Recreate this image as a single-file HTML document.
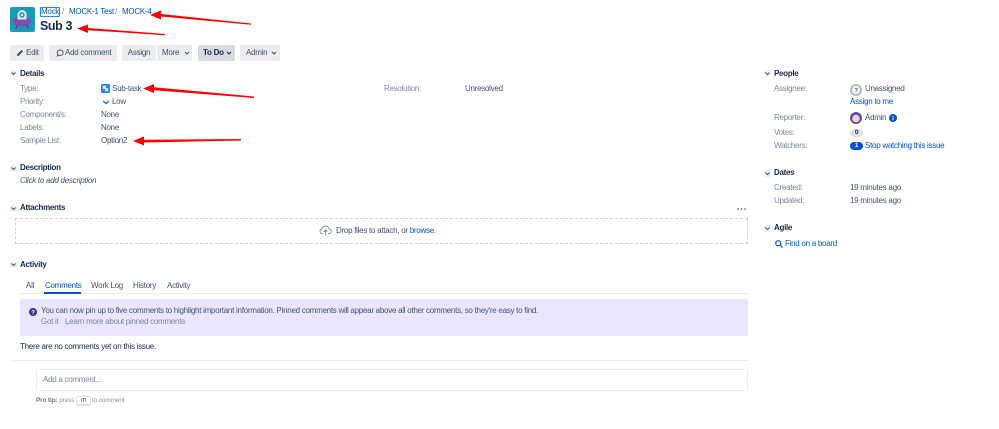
<!DOCTYPE html>
<html><head><meta charset="utf-8"><style>
html,body{margin:0;padding:0;background:#fff}
body{width:999px;height:429px;position:relative;overflow:hidden;font-family:"Liberation Sans",sans-serif;font-size:8px;letter-spacing:-.27px;color:#42526e}
.t{position:absolute;white-space:nowrap;line-height:12px}
.l{color:#0052cc}
.g{color:#7a869a}
.d{color:#172b4d}
.h{font-weight:bold;color:#172b4d;font-size:8px;letter-spacing:-.3px}
.b{position:absolute;background:#ebecf0;border-radius:2px;height:16px;top:45px;line-height:16px;color:#42526e;font-size:8px;text-align:left;white-space:nowrap}
.c{position:absolute;width:7px;height:7px;background:#f0f1f4;border-radius:1px}
svg{position:absolute;overflow:visible}
</style></head><body>

<!-- project avatar -->
<svg style="left:10px;top:7px" width="25" height="25" viewBox="0 0 25 25">
<rect width="25" height="25" rx="2" fill="#1a9bb5"/>
<path d="M7 18l-1 3.500M17 18l1 3.500" stroke="#5e3a90" stroke-width="1.500"/>
<ellipse cx="12" cy="14.500" rx="9.500" ry="4.800" fill="#7e4fb0"/>
<path d="M7.500 12.500V7.500a4.500 4.500 0 0 1 9 0v5z" fill="#dfeef5"/>
<circle cx="12" cy="8" r="2.700" fill="#2f8fc4"/><circle cx="12" cy="8" r="1.100" fill="#fff"/>
</svg>

<div class="t l" style="left:40px;top:7px;border:1px solid #2684ff;line-height:8px;height:8px;width:18px;text-align:center;border-radius:1px">Mock</div>
<div class="t g" style="left:62px;top:6px">/</div>
<div class="t l" style="left:69px;top:6px">MOCK-1 Test</div>
<div class="t g" style="left:115px;top:6px">/</div>
<div class="t l" style="left:122px;top:6px">MOCK-4</div>
<div class="t d" style="left:40px;top:18px;font-size:12.500px;letter-spacing:-.4px;line-height:17px;font-weight:bold">Sub 3</div>

<!-- toolbar -->
<div class="b" style="left:10px;width:34px;padding-left:0"><span style="padding-left:16px">Edit</span></div>
<svg style="left:16px;top:49px" width="8" height="8" viewBox="0 0 8 8"><path d="M1 7l.4-2L5.600 1 7 2.400 3 6.600z" fill="#42526e"/></svg>
<div class="b" style="left:49px;width:68px"><span style="padding-left:16px">Add comment</span></div>
<svg style="left:56px;top:49px" width="8" height="8" viewBox="0 0 8 8"><path d="M4 1a3 2.700 0 1 1-1.400 5L1.400 7l.3-1.800A3 2.700 0 0 1 4 1z" fill="none" stroke="#42526e" stroke-width=".9"/></svg>
<div class="b" style="left:122px;width:34px;text-align:center">Assign</div>
<div class="b" style="left:157px;width:35px"><span style="padding-left:5px">More</span></div>
<div class="b" style="left:198px;width:37px;background:#d8dae0;color:#172b4d;font-weight:bold"><span style="padding-left:5px">To Do</span></div>
<div class="b" style="left:240px;width:40px"><span style="padding-left:6px">Admin</span></div>
<svg style="left:184px;top:51px" width="6" height="4"><path d="M1 1l2 2 2-2" fill="none" stroke="#42526e" stroke-width="1.100"/></svg>
<svg style="left:226px;top:51px" width="6" height="4"><path d="M1 1l2 2 2-2" fill="none" stroke="#172b4d" stroke-width="1.100"/></svg>
<svg style="left:271px;top:51px" width="6" height="4"><path d="M1 1l2 2 2-2" fill="none" stroke="#42526e" stroke-width="1.100"/></svg>

<!-- section chevrons -->
<div class="c" style="left:10px;top:70px"></div>
<div class="c" style="left:10px;top:165px"></div>
<div class="c" style="left:10px;top:205px"></div>
<div class="c" style="left:10px;top:261px"></div>
<div class="c" style="left:764px;top:70px"></div>
<div class="c" style="left:764px;top:170px"></div>
<div class="c" style="left:764px;top:225px"></div>
<svg style="left:10px;top:0" width="7" height="280" fill="none" stroke="#42526e" stroke-width="1"><path d="M1.500 72.500l2 2 2-2M1.500 167.500l2 2 2-2M1.500 207.500l2 2 2-2M1.500 263.500l2 2 2-2"/></svg>
<svg style="left:764px;top:0" width="7" height="240" fill="none" stroke="#42526e" stroke-width="1"><path d="M1.500 72.500l2 2 2-2M1.500 172.500l2 2 2-2M1.500 227.500l2 2 2-2"/></svg>

<!-- details -->
<div class="t h" style="left:20px;top:67.500px">Details</div>
<div class="t g" style="left:20px;top:82.500px">Type:</div>
<svg style="left:101px;top:84px" width="9" height="9" viewBox="0 0 9 9"><rect width="9" height="9" rx="1" fill="#2684ff"/><rect x="1.800" y="1.800" width="3" height="3" fill="#fff"/><rect x="4.200" y="4.200" width="3" height="3" fill="#fff" opacity=".85"/></svg>
<div class="t" style="left:112px;top:82.500px">Sub-task</div>
<div class="t g" style="left:20px;top:95.500px">Priority:</div>
<svg style="left:102px;top:100px" width="8" height="5"><path d="M1 1l3 2.500L7 1" fill="none" stroke="#0065ff" stroke-width="1.200"/></svg>
<div class="t" style="left:112px;top:95.500px">Low</div>
<div class="t g" style="left:20px;top:108.500px">Component/s:</div>
<div class="t" style="left:101px;top:108.500px">None</div>
<div class="t g" style="left:20px;top:121.500px">Labels:</div>
<div class="t" style="left:101px;top:121.500px">None</div>
<div class="t g" style="left:20px;top:134.500px">Sample List:</div>
<div class="t" style="left:101px;top:134.500px">Option2</div>
<div class="t g" style="left:384px;top:82.500px">Resolution:</div>
<div class="t" style="left:465px;top:82.500px">Unresolved</div>

<div class="t h" style="left:20px;top:162px">Description</div>
<div class="t" style="left:20px;top:175px;font-style:italic">Click to add description</div>

<div class="t h" style="left:20px;top:202px">Attachments</div>
<svg style="left:737px;top:208px" width="9" height="3" fill="#42526e"><circle cx="1" cy="1" r=".8"/><circle cx="4.500" cy="1" r=".8"/><circle cx="8" cy="1" r=".8"/></svg>
<div style="position:absolute;left:15px;top:218px;width:731px;height:24px;border:1px dashed #d0d3d9"></div>
<svg style="left:319px;top:225px" width="13" height="11" viewBox="0 0 13 11" fill="none" stroke="#6b778c" stroke-width=".8"><path d="M4 8.500H3a2.300 2.300 0 0 1-.3-4.500A3.800 3.800 0 0 1 10 3.600a2.500 2.500 0 0 1 .2 4.900H9"/><path d="M6.500 10.500V5M4.800 6.800l1.700-1.800 1.700 1.800"/></svg>
<div class="t" style="left:336px;top:224.500px">Drop files to attach, or <span class="l">browse.</span></div>

<div class="t h" style="left:20px;top:259px">Activity</div>
<div class="t" style="left:26px;top:279.500px">All</div>
<div class="t l" style="left:45px;top:279.500px">Comments</div>
<div class="t" style="left:91px;top:279.500px">Work Log</div>
<div class="t" style="left:133px;top:279.500px">History</div>
<div class="t" style="left:167px;top:279.500px">Activity</div>
<div style="position:absolute;left:20px;top:293px;width:728px;height:1px;background:#ebecf0"></div>
<div style="position:absolute;left:44px;top:292px;width:37px;height:2px;background:#0052cc"></div>

<div style="position:absolute;left:20px;top:299px;width:728px;height:37px;background:#eae6ff;border-radius:2px"></div>
<svg style="left:29px;top:308px" width="8" height="8" viewBox="0 0 8 8"><circle cx="4" cy="4" r="4" fill="#403294"/><text x="4" y="6.300" font-size="6" font-weight="bold" text-anchor="middle" fill="#fff" font-family="Liberation Sans">?</text></svg>
<div class="t" style="left:41px;top:305px">You can now pin up to five comments to highlight important information. Pinned comments will appear above all other comments, so they're easy to find.</div>
<div class="t g" style="left:41px;top:316px">Got it</div>
<div class="t g" style="left:65px;top:316px">Learn more about pinned comments</div>

<div class="t d" style="left:20px;top:340.500px">There are no comments yet on this issue.</div>
<div style="position:absolute;left:10px;top:360px;width:738px;height:1px;background:#ebecf0"></div>
<div style="position:absolute;left:36px;top:369px;width:710px;height:20px;border:1px solid #ebecf0;border-radius:2px"></div>
<div class="t g" style="left:43px;top:374px">Add a comment...</div>
<div class="t" style="left:36px;top:394.500px;font-size:6.500px;letter-spacing:-.15px;color:#8993a4"><b style="color:#6b778c">Pro tip:</b> press</div>
<div style="position:absolute;left:76px;top:395.500px;width:13px;height:7px;border:1px solid #dfe1e6;border-bottom-width:2px;border-radius:2px;font-size:7px;line-height:7px;text-align:center;color:#42526e">m</div>
<div class="t" style="left:92px;top:394.500px;font-size:6.500px;letter-spacing:-.15px;color:#8993a4">to comment</div>

<!-- right column -->
<div class="t h" style="left:774px;top:67.500px">People</div>
<div class="t g" style="left:774px;top:83px">Assignee:</div>
<svg style="left:850px;top:84px" width="12" height="12" viewBox="0 0 12 12"><circle cx="6" cy="6" r="6" fill="#b3bac5"/><circle cx="6" cy="6" r="4" fill="#f4f5f7"/><text x="6" y="8" font-size="5.500" font-weight="bold" text-anchor="middle" fill="#42526e" font-family="Liberation Sans">?</text></svg>
<div class="t" style="left:865px;top:83px">Unassigned</div>
<div class="t l" style="left:850px;top:96px">Assign to me</div>
<div class="t g" style="left:774px;top:112px">Reporter:</div>
<svg style="left:850px;top:112px" width="12" height="12" viewBox="0 0 12 12"><circle cx="6" cy="6" r="6" fill="#5e4db2"/><circle cx="6" cy="6.500" r="3.800" fill="#f3d6c8"/></svg>
<div class="t" style="left:865px;top:111.500px">Admin</div>
<svg style="left:889px;top:114px" width="8" height="8" viewBox="0 0 8 8"><circle cx="4" cy="4" r="4" fill="#0052cc"/><rect x="3.500" y="3.400" width="1" height="2.800" fill="#fff"/><rect x="3.500" y="1.800" width="1" height="1" fill="#fff"/></svg>
<div class="t g" style="left:774px;top:127px">Votes:</div>
<div style="position:absolute;left:850px;top:129px;width:13px;height:8px;border-radius:4px;background:#dfe1e6;font-size:6.500px;line-height:8px;text-align:center;font-weight:bold;color:#172b4d">0</div>
<div class="t g" style="left:774px;top:140px">Watchers:</div>
<div style="position:absolute;left:850px;top:142px;width:13px;height:8px;border-radius:4px;background:#0052cc;font-size:6.500px;line-height:8px;text-align:center;font-weight:bold;color:#fff">1</div>
<div class="t l" style="left:865px;top:140px">Stop watching this issue</div>

<div class="t h" style="left:774px;top:167px">Dates</div>
<div class="t g" style="left:774px;top:182px">Created:</div>
<div class="t" style="left:850px;top:182px">19 minutes ago</div>
<div class="t g" style="left:774px;top:195px">Updated:</div>
<div class="t" style="left:850px;top:195px">19 minutes ago</div>

<div class="t h" style="left:774px;top:222px">Agile</div>
<svg style="left:775px;top:240px" width="8" height="8" viewBox="0 0 8 8" fill="none" stroke="#0052cc" stroke-width="1.200"><circle cx="3.200" cy="3.200" r="2.500"/><path d="M5 5l2.500 2.500"/></svg>
<div class="t l" style="left:785px;top:238px">Find on a board</div>

<!-- red annotation arrows -->
<svg style="left:0;top:0" width="999" height="429" fill="#f00" stroke="none">
<path d="M251 23.500L161 14V10.500L150 15l11 4.500V16.500L251 24.800z"/>
<path d="M165 34L88 28V24.500L77 28.500l11 4.500V30.200L165 35.200z"/>
<path d="M254 96.500L154 87.300V84L143 88.500l11 4.500V90.200L254 98z"/>
<path d="M241 139L144 139.800V136.500L133 141l11 4.500V142.500L241 140.500z"/>
</svg>
</body></html>
